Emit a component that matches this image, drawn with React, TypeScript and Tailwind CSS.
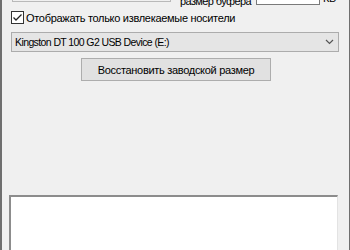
export default function App() {
  return (
    <div className="w-[350px] h-[250px] overflow-hidden bg-[#f0f0f0] border-l-2 border-r border-[#6f6f6f] text-[11px] tracking-[-0.3px] text-black whitespace-nowrap font-['Liberation_Sans',Arial,sans-serif]">
      {/* top row, cut off by the window edge */}
      <div className="flex items-start h-[26px] -mt-[20px]">
        <div className="shrink-0 ml-[10px] w-[159px] h-[22px] border border-[#b9b9b9] bg-[#f0f0f0]" />
        <div className="shrink-0 ml-[9px] mt-[14px] leading-[14px] w-[76px] tracking-[-0.6px]">размер буфера</div>
        <div className="shrink-0 mt-[4px] w-[64px] h-[21px] border border-[#7a7a7a] bg-white" />
        <div className="shrink-0 ml-[3px] mt-[11px] leading-[14px]">КБ</div>
      </div>

      <label className="flex items-center mt-[5px] ml-[9px] h-[13px]">
        <span className="shrink-0 w-[13px] h-[13px] border border-[#333333] bg-white flex items-center justify-center">
          <svg width="11" height="11" viewBox="0 0 11 11">
            <path d="M1.5 5.5 L4 8 L9.5 2.5" fill="none" stroke="#222" strokeWidth="1.3" />
          </svg>
        </span>
        <span className="ml-[2px] leading-[14px]">Отображать только извлекаемые носители</span>
      </label>

      <div className="mt-[8px] mx-[9px] w-[328px] h-[20px] border border-[#acacac] bg-[#e5e5e5] flex items-center justify-between pl-[3px] pr-[4px]">
        <span className="leading-[14px] text-[10.5px] tracking-[-0.6px]">Kingston DT 100 G2 USB Device (E:)</span>
        <svg width="9" height="6" viewBox="0 0 9 6">
          <path d="M1 1 L4.5 4.5 L8 1" fill="none" stroke="#555" strokeWidth="1.2" />
        </svg>
      </div>

      <div className="flex mt-[6px] ml-[79px]">
        <button className="w-[190px] h-[23px] border border-[#adadad] bg-[#e1e1e1] leading-[14px]">
          Восстановить заводской размер
        </button>
      </div>

      <div className="mt-[114px] ml-[7px] w-[329px] h-[60px] bg-white border-t-2 border-l-2 border-t-[#8c8c8c] border-l-[#8c8c8c] border-r border-r-[#e3e3e3]" />
    </div>
  );
}
